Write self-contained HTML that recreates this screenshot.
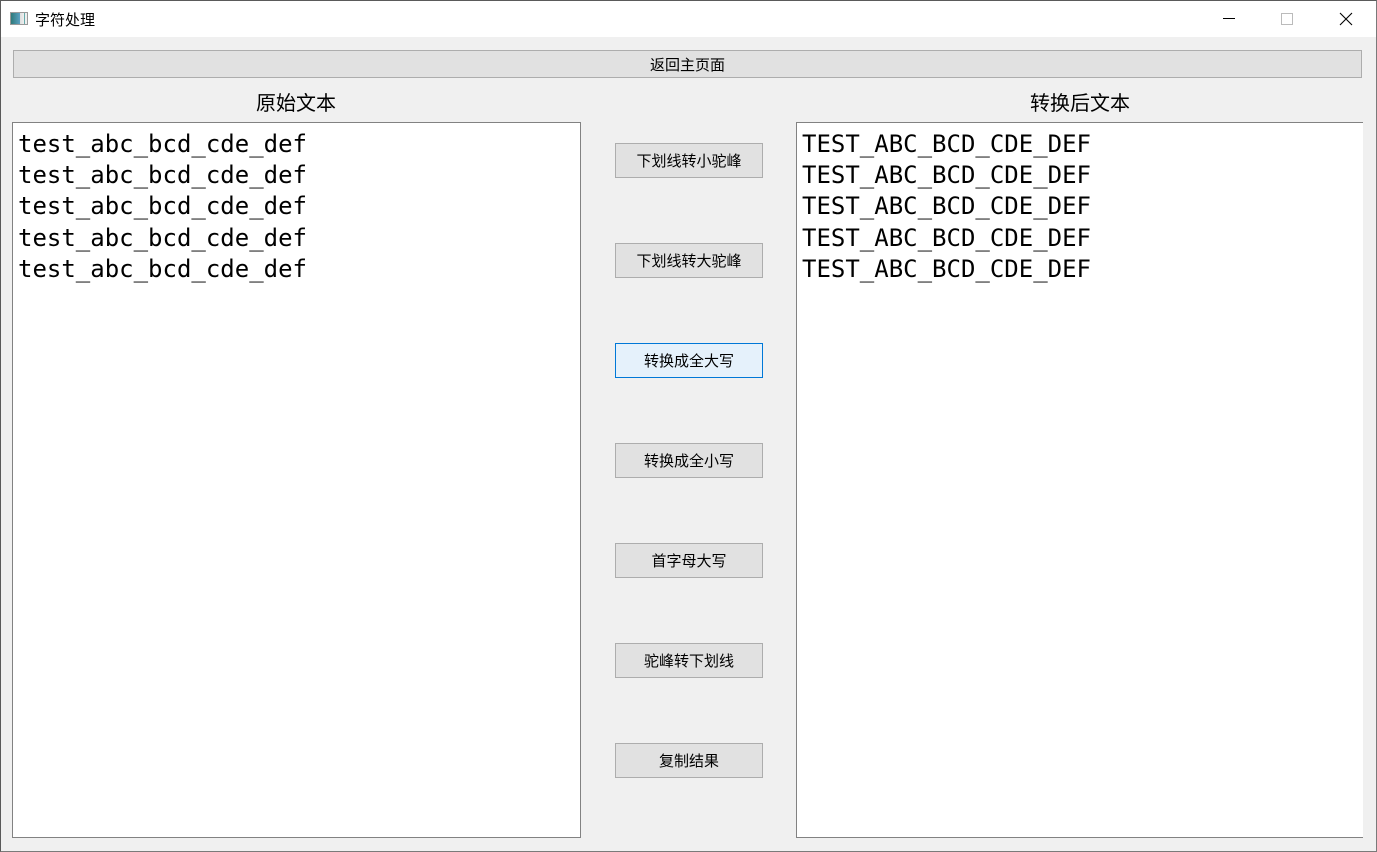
<!DOCTYPE html>
<html><head><meta charset="utf-8"><style>
*{margin:0;padding:0;box-sizing:border-box}
html,body{width:1377px;height:852px;overflow:hidden;background:#f0f0f0;font-family:"Liberation Sans","Noto Sans CJK SC",sans-serif}
.win{position:absolute;left:0;top:0;width:1377px;height:852px;border:1px solid #5a5a5a;border-bottom-color:#7a7a7a;border-right-color:#7a7a7a;pointer-events:none;z-index:5}
.title{position:absolute;left:0;top:0;width:1377px;height:37px;background:#fff}
.title .t{position:absolute;left:35px;top:9px;font-size:15px;color:#000}
.ico{position:absolute;left:10px;top:12px;width:18px;height:13px;border:1px solid #999;background:linear-gradient(90deg,#2f7a7a 0,#5aa0c0 55%,#ddd 55%,#eee 80%,#6aa 80%,#6aa 86%,#eee 86%)}
.min{position:absolute;left:1223px;top:18px;width:12px;height:1px;background:#000}
.max{position:absolute;left:1281px;top:13px;width:12px;height:12px;border:1px solid #bbb}
.cls{position:absolute;left:1339px;top:12px;width:14px;height:14px}
.top{position:absolute;left:13px;top:50px;width:1349px;height:28px;background:#e1e1e1;border:1px solid #adadad;font-size:15px;text-align:center;line-height:29px;color:#000}
.lbl{position:absolute;top:87px;font-size:20px;color:#000}
.te{position:absolute;top:122px;height:716px;background:#fff;border:1px solid #828282;font-family:"DejaVu Sans Mono",monospace;font-size:24px;line-height:31.2px;padding:6px 0 0 5px;color:#000;white-space:pre;overflow:hidden}
.btn{position:absolute;left:615px;width:148px;height:35px;background:#e1e1e1;border:1px solid #adadad;font-size:15px;text-align:center;line-height:35px;color:#000}
.btn.f{background:#e5f1fb;border-color:#0078d7}
</style></head><body>
<div class="title"><div class="ico"></div><div class="t">字符处理</div>
<div class="min"></div><div class="max"></div>
<svg class="cls" viewBox="0 0 14 14"><path d="M1 1L13 13M13 1L1 13" stroke="#000" stroke-width="1.1"/></svg>
</div>
<div class="top">返回主页面</div>
<div class="lbl" style="left:256px">原始文本</div>
<div class="lbl" style="left:1030px">转换后文本</div>
<div class="te" style="left:12px;width:569px">test_abc_bcd_cde_def
test_abc_bcd_cde_def
test_abc_bcd_cde_def
test_abc_bcd_cde_def
test_abc_bcd_cde_def</div>
<div class="te" style="left:796px;width:567px;border-right:none">TEST_ABC_BCD_CDE_DEF
TEST_ABC_BCD_CDE_DEF
TEST_ABC_BCD_CDE_DEF
TEST_ABC_BCD_CDE_DEF
TEST_ABC_BCD_CDE_DEF</div>
<div class="btn" style="top:143px">下划线转小驼峰</div>
<div class="btn" style="top:243px">下划线转大驼峰</div>
<div class="btn f" style="top:343px">转换成全大写</div>
<div class="btn" style="top:443px">转换成全小写</div>
<div class="btn" style="top:543px">首字母大写</div>
<div class="btn" style="top:643px">驼峰转下划线</div>
<div class="btn" style="top:743px">复制结果</div>
<div class="win"></div>
</body></html>
